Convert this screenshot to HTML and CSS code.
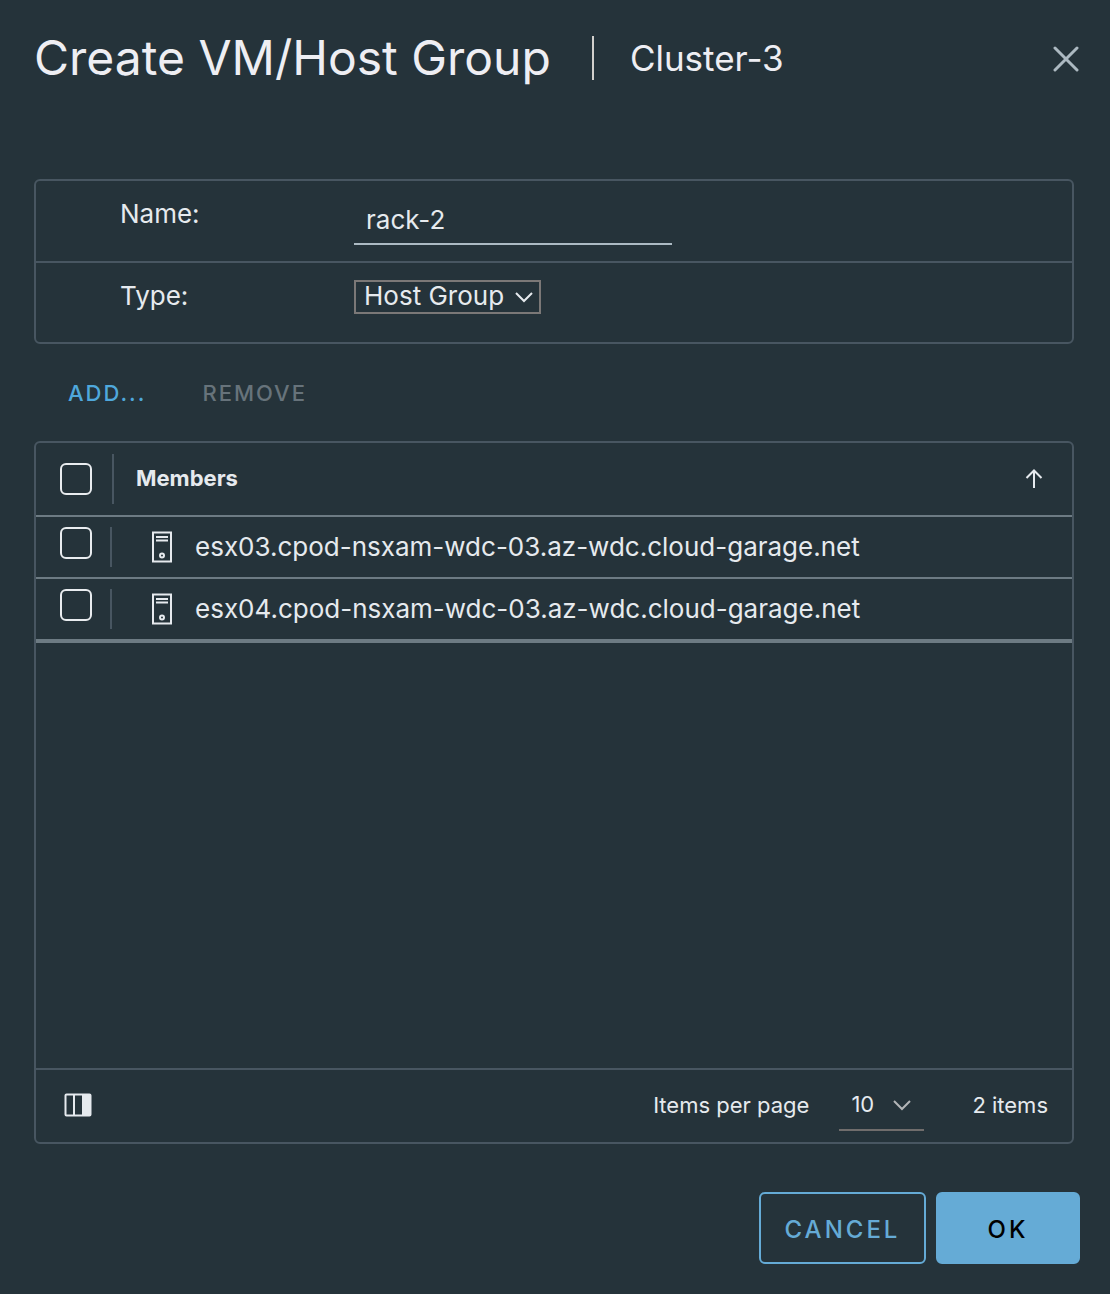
FILE: index.html
```html
<!DOCTYPE html>
<html lang="en">
<head>
<meta charset="utf-8">
<meta name="viewport" content="width=device-width, initial-scale=1">
<title>Create VM/Host Group</title>
<link rel="stylesheet" href="styles.css">
</head>
<body>
<form class="dialog">
  <header class="dialog-header">
    <h1 class="title">Create VM/Host Group</h1>
    <p class="subtitle">Cluster-3</p>
    <button class="icon-button close" type="button" aria-label="Close">
      <svg width="28" height="28" viewBox="0 0 28 28" fill="none" stroke="currentColor" stroke-width="3" stroke-linecap="round"><path d="M3 4 25 26M25 4 3 26"/></svg>
    </button>
  </header>

  <section class="panel settings">
    <div class="field">
      <label for="name">Name:</label>
      <input class="text-input" id="name" type="text" value="rack-2">
    </div>
    <div class="field">
      <label for="type">Type:</label>
      <span class="select-wrap">
        <select class="type-select" id="type"><option>Host Group</option><option>VM Group</option></select>
        <svg class="chevron" width="18" height="12" viewBox="0 0 18 12" fill="none" stroke="currentColor" stroke-width="2"><path d="M1 2 9 10 17 2"/></svg>
      </span>
    </div>
  </section>

  <div class="actions">
    <button class="link-button" type="button">ADD...</button>
    <button class="link-button" type="button" disabled>REMOVE</button>
  </div>

  <section class="panel grid">
    <table class="members">
      <thead>
        <tr>
          <th class="select-cell"><span class="select-box"><input type="checkbox" aria-label="Select all"></span></th>
          <th scope="col">
            <div class="column-title">Members
              <button class="icon-button" type="button" aria-label="Sort members">
                <svg width="18" height="20" viewBox="0 0 18 20" fill="none" stroke="currentColor" stroke-width="2"><path d="M9 20V3M1.500 10 9 2.500 16.500 10"/></svg>
              </button>
            </div>
          </th>
        </tr>
      </thead>
      <tbody>
        <tr>
          <td class="select-cell"><span class="select-box"><input type="checkbox" id="host-3"></span></td>
          <td>
            <label class="host" for="host-3">
              <svg width="20" height="32" viewBox="0 0 20 32" fill="none" stroke="currentColor" stroke-width="2"><path d="M1 1.500H19V30.500H1ZM4 6H16M4 9.500H16"/><circle cx="10" cy="24.500" r="2"/></svg>
              esx03.cpod-nsxam-wdc-03.az-wdc.cloud-garage.net
            </label>
          </td>
        </tr>
        <tr>
          <td class="select-cell"><span class="select-box"><input type="checkbox" id="host-4"></span></td>
          <td>
            <label class="host" for="host-4">
              <svg width="20" height="32" viewBox="0 0 20 32" fill="none" stroke="currentColor" stroke-width="2"><path d="M1 1.500H19V30.500H1ZM4 6H16M4 9.500H16"/><circle cx="10" cy="24.500" r="2"/></svg>
              esx04.cpod-nsxam-wdc-03.az-wdc.cloud-garage.net
            </label>
          </td>
        </tr>
      </tbody>
    </table>
    <footer class="grid-footer">
      <button class="icon-button" type="button" aria-label="Show columns">
        <svg width="28" height="24" viewBox="0 0 28 24"><rect x="1.500" y="1.500" width="25" height="21" rx="1" fill="none" stroke="currentColor" stroke-width="2"/><path d="M10 1V23" stroke="currentColor" stroke-width="2"/><path d="M18 1H27V23H18Z" fill="currentColor"/></svg>
      </button>
      <label class="page-label" for="page-size">Items per page</label>
      <span class="select-wrap">
        <select class="page-select" id="page-size"><option>10</option><option>20</option><option>50</option></select>
        <svg class="chevron" width="18" height="12" viewBox="0 0 18 12" fill="none" stroke="currentColor" stroke-width="2"><path d="M1 2 9 10 17 2"/></svg>
      </span>
      <span class="total">2 items</span>
    </footer>
  </section>

  <footer class="dialog-footer">
    <button class="button" type="button">CANCEL</button>
    <button class="button primary" type="submit">OK</button>
  </footer>
</form>
</body>
</html>
```
FILE: styles.css
```css
* { box-sizing: border-box; }

body {
  margin: 0;
  background: #25333a;
  color: #e6eaee;
  font-family: Inter, "Liberation Sans", sans-serif;
  font-size: 26px;
  line-height: 32px;
}

button, input, select {
  margin: 0;
  padding: 0;
  border: 0;
  border-radius: 0;
  background: none;
  color: inherit;
  font: inherit;
}

svg { display: block; flex: none; }

.dialog {
  display: flex;
  flex-direction: column;
  min-height: 100vh;
  padding: 30px 30px 30px 34px;
}

.dialog-header {
  display: flex;
  align-items: center;
  height: 56px;
  margin-bottom: 93px;
  color: #eeeef3;
}

.title {
  margin: 0;
  font-size: 48px;
  font-weight: 400;
  line-height: 56px;
}

.subtitle {
  margin: 0 0 0 41px;
  padding-left: 36px;
  border-left: 2px solid #d2d0cc;
  font-size: 35px;
  font-weight: 400;
  line-height: 44px;
}

.icon-button { display: block; }

.close { margin-left: auto; color: #acb9c1; }

.panel {
  margin-right: 6px;
  border: 2px solid #485661;
  border-radius: 6px;
}

.field {
  display: flex;
  align-items: flex-start;
  height: 80px;
  padding: 17px 0 0 84px;
}

.field + .field {
  height: 81px;
  border-top: 2px solid #485661;
}

.field label { width: 234px; }

.text-input {
  width: 318px;
  height: 47px;
  padding: 0 12px 3px;
  border-bottom: 2px solid #acbac3;
}

.select-wrap { display: grid; align-items: center; }

.select-wrap > * { grid-area: 1 / 1; }

.chevron { justify-self: end; pointer-events: none; }

.type-select, .page-select { appearance: none; }

.type-select {
  width: 187px;
  height: 34px;
  padding: 0 0 2px 8px;
  border: 2px solid #7b7877;
  line-height: 28px;
}

.type-select + .chevron { margin-right: 8px; }

.actions {
  display: flex;
  gap: 56px;
  padding: 33px 34px 32px;
}

.link-button {
  color: #4fa8dc;
  font-size: 22px;
  font-weight: 500;
  letter-spacing: 2px;
}

.link-button:disabled { color: #67737b; }

.grid {
  display: flex;
  flex: 1;
  flex-direction: column;
}

.members {
  width: 100%;
  border-spacing: 0;
}

.members th, .members td {
  padding: 0;
  border-bottom: 2px solid #6d7b83;
  text-align: left;
}

.members th { height: 74px; font-size: 22px; }

.members td { height: 62px; }

.members tbody tr:last-child td { height: 64px; border-bottom-width: 4px; }

.members .select-cell { width: 78px; }

.select-box {
  display: flex;
  align-items: center;
  width: 76px;
  height: 40px;
  padding: 0 0 8px 24px;
  border-right: 2px solid #485661;
}

th .select-box { width: 78px; height: 50px; padding-bottom: 0; }

input[type="checkbox"] {
  width: 32px;
  height: 32px;
  border: 2px solid #e9ecef;
  border-radius: 6px;
  appearance: none;
}

.column-title {
  display: flex;
  justify-content: space-between;
  padding: 0 29px 2px 22px;
}

.column-title .icon-button { align-self: center; }

.host {
  display: flex;
  align-items: center;
  gap: 23px;
  padding-left: 38px;
}

.grid-footer {
  display: flex;
  align-items: center;
  height: 74px;
  margin-top: auto;
  padding: 0 24px 3px 28px;
  border-top: 2px solid #485661;
  font-size: 22px;
}

.page-label { margin: 0 30px 0 auto; }

.page-select {
  width: 85px;
  height: 52px;
  padding-left: 12px;
  border-bottom: 2px solid #706d6c;
}

.page-select + .chevron { margin-right: 13px; color: #b3b5b7; }

.total { margin-left: 48px; }

.dialog-footer {
  display: flex;
  justify-content: flex-end;
  gap: 10px;
  margin-top: 48px;
}

.button {
  min-width: 167px;
  height: 72px;
  padding: 4px 0 0;
  border: 2px solid #65abd6;
  border-radius: 6px;
  color: #65abd6;
  font-size: 24px;
  font-weight: 500;
  letter-spacing: 3px;
}

.primary { min-width: 144px; background: #65abd6; color: #000; }
```
